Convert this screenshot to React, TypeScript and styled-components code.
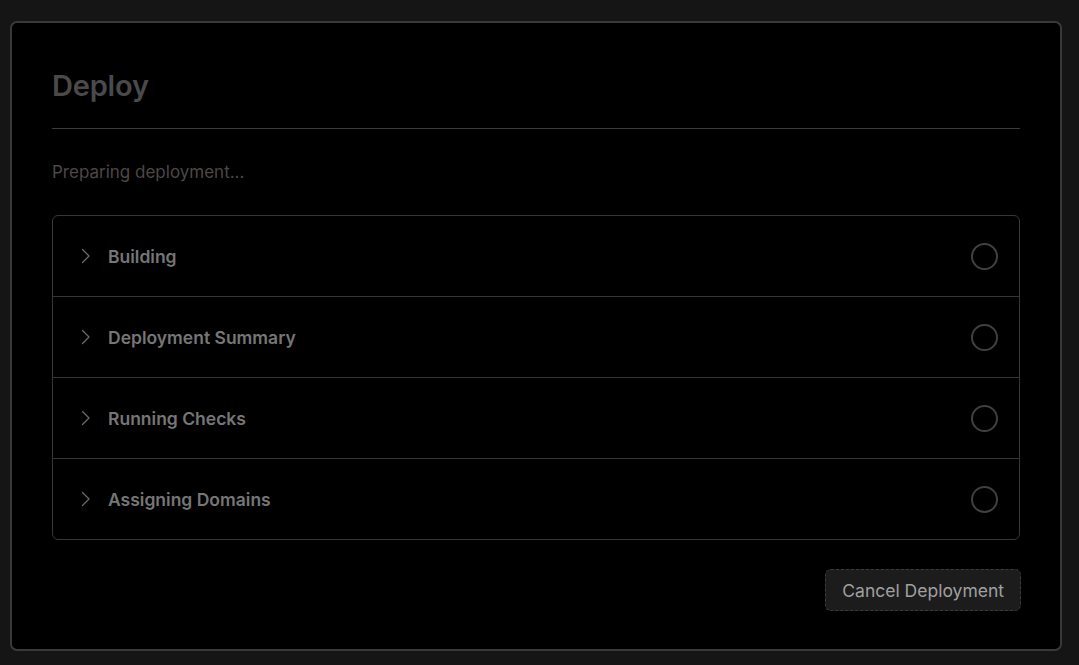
import React from 'react';
import styled, { createGlobalStyle } from 'styled-components';

const steps = ['Building', 'Deployment Summary', 'Running Checks', 'Assigning Domains'];

const GlobalStyle = createGlobalStyle`
  html, body {
    margin: 0;
    padding: 0;
    background: #151515;
    font-family: Inter, "Noto Sans", sans-serif;
  }
`;

const Page = styled.div`
  padding: 21px 17px 13px 10px;
  min-height: 665px;
  box-sizing: border-box;
`;

const Card = styled.div`
  background: #000;
  border: 2px solid #393939;
  border-radius: 7px;
  padding: 36px 40px 38px 40px;
  display: flex;
  flex-direction: column;
`;

const Title = styled.h1`
  margin: 0;
  font-size: 29px;
  font-weight: 600;
  line-height: 54px;
  color: #4a4a4a;
  letter-spacing: -0.2px;
  padding-bottom: 15px;
  border-bottom: 1px solid #3a3a3a;
`;

const Status = styled.p`
  margin: 0;
  padding: 33px 0 33px;
  font-size: 17px;
  line-height: 20px;
  color: #4d4747;
`;

const StepList = styled.div`
  border: 1px solid #363636;
  border-radius: 6px;
`;

const StepRow = styled.div`
  height: 80px;
  display: flex;
  align-items: center;
  padding: 0 21px 0 24px;
  border-top: 1px solid #363636;

  &:first-child {
    border-top: none;
  }
`;

const Chevron = styled.span`
  display: flex;
  width: 16px;
  height: 16px;
  margin-right: 15px;
  color: #6a6a6a;
`;

const StepName = styled.span`
  flex: 1;
  font-size: 17.5px;
  font-weight: 600;
  color: #767676;
`;

const StatusRing = styled.span`
  width: 23px;
  height: 23px;
  border: 2px solid #404040;
  border-radius: 50%;
`;

const Footer = styled.div`
  display: flex;
  justify-content: flex-end;
  margin-top: 29px;
  margin-right: -1px;
`;

const CancelButton = styled.button`
  height: 42px;
  padding: 0 16px;
  background: #1c1c1c;
  border: 1px dashed #3c3c3c;
  border-radius: 6px;
  font-family: inherit;
  font-size: 17.5px;
  color: #a0a0a0;
  cursor: pointer;
`;

const ChevronIcon = () => (
  <svg width="16" height="16" viewBox="0 0 16 16" fill="none">
    <path d="M5.5 1.5 12 8 5.5 14.5" stroke="currentColor" strokeWidth="1.3" strokeLinecap="round" strokeLinejoin="round" />
  </svg>
);

const App: React.FC = () => (
  <>
    <GlobalStyle />
    <Page>
      <Card>
        <Title>Deploy</Title>
        <Status>Preparing deployment...</Status>
        <StepList>
          {steps.map((step) => (
            <StepRow key={step}>
              <Chevron>
                <ChevronIcon />
              </Chevron>
              <StepName>{step}</StepName>
              <StatusRing />
            </StepRow>
          ))}
        </StepList>
        <Footer>
          <CancelButton>Cancel Deployment</CancelButton>
        </Footer>
      </Card>
    </Page>
  </>
);

export default App;
